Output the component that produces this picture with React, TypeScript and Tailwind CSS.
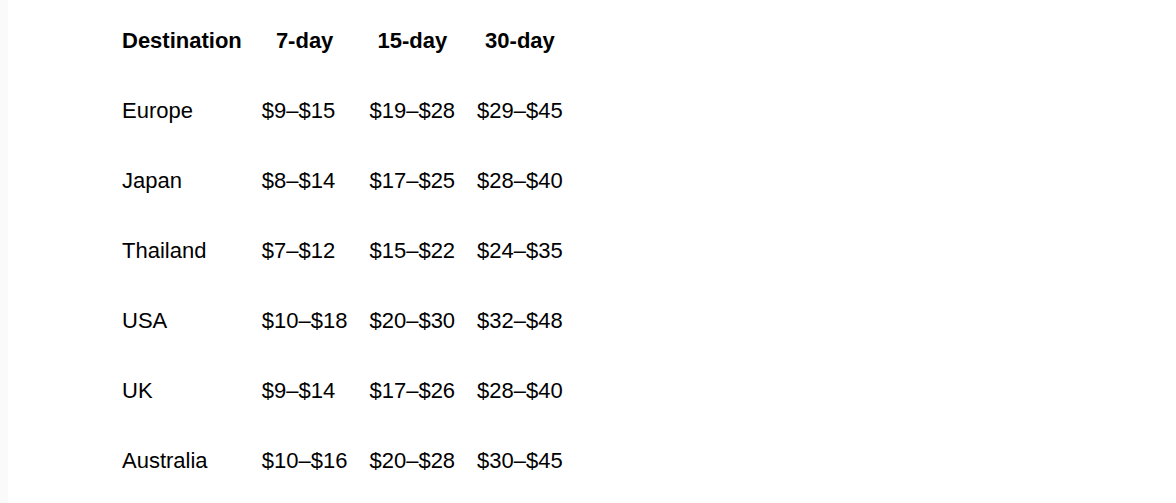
import React from 'react';

interface PriceRow {
  destination: string;
  week: string;
  half: string;
  month: string;
}

const rows: PriceRow[] = [
  { destination: 'Europe', week: '$9–$15', half: '$19–$28', month: '$29–$45' },
  { destination: 'Japan', week: '$8–$14', half: '$17–$25', month: '$28–$40' },
  { destination: 'Thailand', week: '$7–$12', half: '$15–$22', month: '$24–$35' },
  { destination: 'USA', week: '$10–$18', half: '$20–$30', month: '$32–$48' },
  { destination: 'UK', week: '$9–$14', half: '$17–$26', month: '$28–$40' },
  { destination: 'Australia', week: '$10–$16', half: '$20–$28', month: '$30–$45' },
];

// per-column cell padding, tuned to the reference spacing
const cols = [
  'pl-[10px] pr-[10px]',
  'pl-[10px] pr-[11px]',
  'pl-[11px] pr-[11px]',
  'pl-[11px] pr-[10px]',
];

export default function App() {
  return (
    <div className="flex h-[503px] w-full bg-white text-black font-['Liberation_Sans',Arial,sans-serif]">
      {/* faint gutter on the left */}
      <div className="w-[8px] shrink-0 bg-[#fafafa]" />

      <div className="flex-1 pl-[104px] pt-[6px]">
        <table className="border-collapse text-[22px] leading-none">
          <thead>
            <tr className="h-[70px]">
              <th className={`${cols[0]} font-bold text-center`}>Destination</th>
              <th className={`${cols[1]} font-bold text-center`}>7-day</th>
              <th className={`${cols[2]} font-bold text-center`}>15-day</th>
              <th className={`${cols[3]} font-bold text-center`}>30-day</th>
            </tr>
          </thead>
          <tbody>
            {rows.map((row) => (
              <tr key={row.destination} className="h-[70px]">
                <td className={`${cols[0]} text-left`}>{row.destination}</td>
                <td className={`${cols[1]} text-left`}>{row.week}</td>
                <td className={`${cols[2]} text-left`}>{row.half}</td>
                <td className={`${cols[3]} text-left`}>{row.month}</td>
              </tr>
            ))}
          </tbody>
        </table>
      </div>
    </div>
  );
}
